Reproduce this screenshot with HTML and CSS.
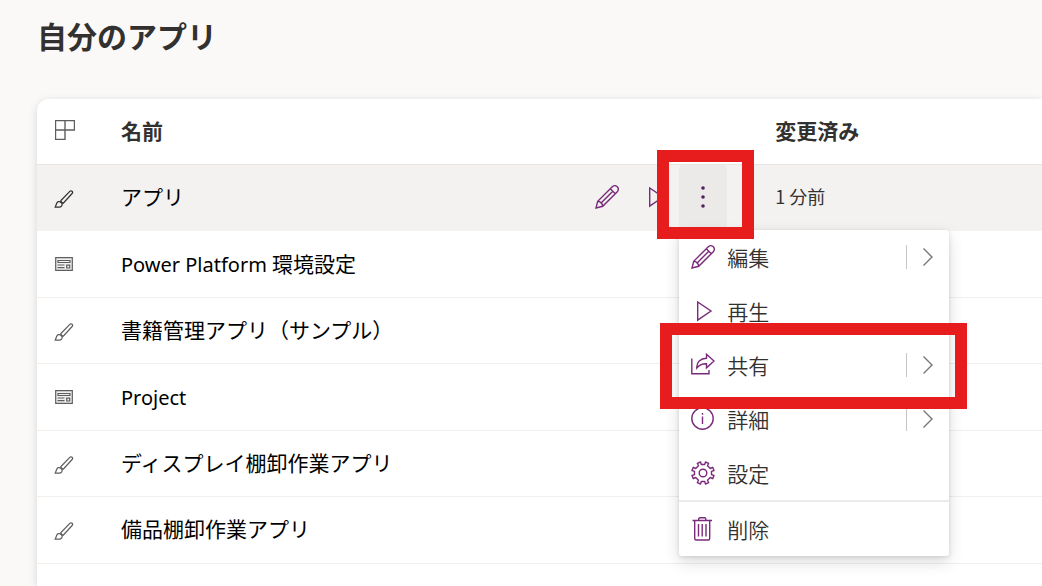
FILE: index.html
```html
<!DOCTYPE html>
<html lang="ja">
<head>
<meta charset="utf-8">
<title>自分のアプリ</title>
<link rel="stylesheet" href="styles.css">
</head>
<body>
<svg class="sprite" aria-hidden="true">
  <symbol id="pencil" viewBox="0 0 24 24"><path d="M1 23l1.700-6.700L17.300 1.700a3.500 3.500 0 0 1 5 5L7.700 21.300zM15.300 3.700l5 5M2.700 16.300c2.600.1 4.900 2.400 5 5M17.800 6.200L5.600 18.400"/></symbol>
  <symbol id="play" viewBox="0 0 24 24"><path d="M6.700 3v18.200L20 12z"/></symbol>
  <symbol id="share" viewBox="0 0 24 24"><path d="M.8 5.500v15.200H18V17M15.500 1.200l7.500 6.800-7.500 6.800v-4.100c-4.500-.2-7.200 1-9.700 4.300C5.300 9 9.500 5.300 15.500 5.200z"/></symbol>
  <symbol id="info" viewBox="0 0 24 24"><circle cx="11.500" cy="11.500" r="10.700"/><path d="M11.500 9.500v7.500M11.500 6v1.700"/></symbol>
  <symbol id="gear" viewBox="0 0 24 24"><circle cx="12" cy="12" r="3.800"/><path stroke-linejoin="round" d="M10.300 3.500L9.500 1 6.300 2.300l1.200 2.400-2.800 2.800-2.400-1.200L1 9.500l2.500.8v3.400l-2.500.8 1.300 3.200 2.400-1.200 2.800 2.800-1.200 2.400L9.500 23l.8-2.500h3.400l.8 2.500 3.200-1.300-1.200-2.400 2.800-2.800 2.400 1.200 1.300-3.200-2.500-.8v-3.400l2.500-.8-1.300-3.200-2.400 1.200-2.800-2.800 1.200-2.400L14.500 1l-.8 2.500z"/></symbol>
  <symbol id="trash" viewBox="0 0 24 24"><path d="M1.500 3.500h19.500M3.700 3.500v18a1.500 1.500 0 0 0 1.500 1.500h12a1.500 1.500 0 0 0 1.500-1.500v-18M7.700 3.500V2A1.200 1.200 0 0 1 8.900.8h4.700A1.200 1.200 0 0 1 14.800 2v1.500M7.500 7v12.500M11.200 7v12.500M15 7v12.500"/></symbol>
  <symbol id="chevron" viewBox="0 0 12 20"><path d="M1.500 1.500L10 10l-8.500 8.500"/></symbol>
  <symbol id="brush" viewBox="0 0 20 20"><path d="M6.500 13L15.800 3.300a1.500 1.500 0 0 1 2.300 2.200L9 15.500M6.500 13l2.500 2.500M1.200 19.200L2.700 15.300a2.400 2.400 0 0 1 3.800-1.200l1.500 1.500c.6 2-.9 3.600-2.700 3.600z"/></symbol>
  <symbol id="form" viewBox="0 0 20 20"><path fill="#edeff0" d="M1.700 3.700h16.600v12.600H1.700z"/><path d="M4 6.500h12v2H4zM3.500 11h7M3.500 13.700h7M12.700 11.200h3v2.800h-3z"/></symbol>
  <symbol id="grid" viewBox="0 0 20 20"><path d="M.5.500h19v9.500H.5zM.5 10v9.500H10V.5"/></symbol>
</svg>

<h1 class="title">自分のアプリ</h1>

<main class="card">
  <table class="apps">
    <thead>
      <tr>
        <th class="col-icon" scope="col" aria-label="種類"><svg class="icon grid-icon"><use href="#grid"/></svg></th>
        <th class="col-name" scope="col">名前</th>
        <th class="col-date" scope="col">変更済み</th>
      </tr>
    </thead>
    <tbody>
      <tr class="selected">
        <td><svg class="icon type-icon"><use href="#brush"/></svg></td>
        <td>
          <div class="name-cell">
            <span class="label">アプリ</span>
            <div class="commands">
              <button class="command" type="button" aria-label="編集"><svg class="icon accent"><use href="#pencil"/></svg></button>
              <button class="command" type="button" aria-label="再生"><svg class="icon accent"><use href="#play"/></svg></button>
              <div class="more">
                <button class="command open" type="button" aria-label="その他のコマンド" aria-expanded="true"><svg class="icon dots" viewBox="0 0 24 24"><circle cx="12" cy="3" r="1.800"/><circle cx="12" cy="12" r="1.800"/><circle cx="12" cy="21" r="1.800"/></svg></button>
                <div class="menu" role="menu">
                  <div class="item"><button class="action" type="button" role="menuitem"><svg class="icon accent"><use href="#pencil"/></svg>編集</button><button class="expand" type="button" aria-label="編集のオプション"><svg class="icon chevron"><use href="#chevron"/></svg></button></div>
                  <div class="item"><button class="action" type="button" role="menuitem"><svg class="icon accent"><use href="#play"/></svg>再生</button></div>
                  <div class="item"><button class="action" type="button" role="menuitem"><svg class="icon accent"><use href="#share"/></svg>共有</button><button class="expand" type="button" aria-label="共有のオプション"><svg class="icon chevron"><use href="#chevron"/></svg></button><span class="highlight highlight-item"></span></div>
                  <div class="item"><button class="action" type="button" role="menuitem"><svg class="icon accent"><use href="#info"/></svg>詳細</button><button class="expand" type="button" aria-label="詳細のオプション"><svg class="icon chevron"><use href="#chevron"/></svg></button></div>
                  <div class="item"><button class="action" type="button" role="menuitem"><svg class="icon accent"><use href="#gear"/></svg>設定</button></div>
                  <hr class="divider">
                  <div class="item"><button class="action" type="button" role="menuitem"><svg class="icon accent"><use href="#trash"/></svg>削除</button></div>
                </div>
                <span class="highlight highlight-more"></span>
              </div>
            </div>
          </div>
        </td>
        <td class="date">1 分前</td>
      </tr>
      <tr>
        <td><svg class="icon type-icon"><use href="#form"/></svg></td>
        <td><span class="latin">Power Platform </span>環境設定</td>
        <td></td>
      </tr>
      <tr>
        <td><svg class="icon type-icon"><use href="#brush"/></svg></td>
        <td><span class="label">書籍管理アプリ（サンプル）</span></td>
        <td></td>
      </tr>
      <tr>
        <td><svg class="icon type-icon"><use href="#form"/></svg></td>
        <td><span class="latin">Project</span></td>
        <td></td>
      </tr>
      <tr>
        <td><svg class="icon type-icon"><use href="#brush"/></svg></td>
        <td><span class="label">ディスプレイ棚卸作業アプリ</span></td>
        <td></td>
      </tr>
      <tr>
        <td><svg class="icon type-icon"><use href="#brush"/></svg></td>
        <td><span class="label">備品棚卸作業アプリ</span></td>
        <td></td>
      </tr>
    </tbody>
  </table>
</main>
</body>
</html>
```

FILE: styles.css
```css
* {
  box-sizing: border-box;
}

body {
  display: flex;
  flex-direction: column;
  min-height: 100vh;
  margin: 0;
  background: #faf9f8;
  color: #000;
  font-family: "Noto Sans CJK JP", sans-serif;
  font-size: 21px;
  line-height: 30px;
}

button {
  margin: 0;
  padding: 0;
  border: 0;
  background: none;
  color: inherit;
  font: inherit;
  cursor: pointer;
}

.sprite {
  position: absolute;
  width: 0;
  height: 0;
}

.title {
  margin: 0;
  padding: 13px 37px 42px;
  color: #323130;
  font-size: 30px;
  font-weight: 700;
  line-height: 44px;
}

.card {
  flex: 1;
  margin-left: 37px;
  border-top-left-radius: 12px;
  background: #fff;
  box-shadow: 0 2px 8px rgba(0, 0, 0, 0.14);
}

.apps {
  width: 100%;
  border-collapse: separate;
  border-spacing: 0;
  table-layout: fixed;
}

.apps th,
.apps td {
  height: 66px;
  padding: 0;
  border-bottom: 1px solid #f0efee;
  text-align: left;
  vertical-align: middle;
}

.apps tbody tr:nth-child(even) td {
  height: 67px;
}

.apps th {
  padding-bottom: 4px;
  border-bottom-color: #e8e6e4;
  color: #323130;
  font-weight: 700;
}

.apps .col-icon {
  width: 84px;
}

.apps .col-name {
  width: 65%;
}

.apps th:first-child,
.apps td:first-child {
  padding-left: 17px;
}

.apps th:last-child,
.apps td:last-child {
  padding-left: 1px;
}

.apps .selected td {
  border-bottom-color: #f3f2f1;
  background: #f3f2f1;
}

.apps .date {
  padding-bottom: 4px;
  color: #323130;
  font-size: 18px;
}

.label {
  display: block;
  padding-bottom: 4px;
}

.latin {
  font-family: "Noto Sans", "Open Sans", sans-serif;
  font-size: 20px;
}

.icon {
  display: block;
  flex: none;
  width: 24px;
  height: 24px;
  fill: none;
  stroke: currentColor;
  stroke-width: 1.4;
}

.grid-icon {
  width: 20px;
  height: 20px;
  margin-left: 1px;
  color: #605e5c;
}

.type-icon {
  width: 20px;
  height: 20px;
  color: #605e5c;
  stroke-width: 1.2;
}

.selected .type-icon {
  color: #323130;
}

.accent {
  color: #7a2a7a;
}

.dots {
  fill: #53205b;
  stroke: none;
}

.name-cell {
  display: flex;
  align-items: center;
  justify-content: space-between;
  padding-right: 47px;
}

.commands {
  display: flex;
}

.command {
  display: flex;
  align-items: center;
  justify-content: center;
  width: 48px;
  height: 65px;
  padding-bottom: 2px;
}

.open {
  border-radius: 4px;
  background: #ebeae9;
}

.more {
  position: relative;
}

.menu {
  position: absolute;
  top: 100%;
  left: 0;
  z-index: 1;
  width: 270px;
  border-radius: 3px;
  background: #fff;
  box-shadow: 0 6px 16px rgba(0, 0, 0, 0.14), 0 1px 4px rgba(0, 0, 0, 0.12);
  color: #323130;
  font-weight: 350;
}

.item {
  position: relative;
  display: flex;
  align-items: center;
}

.action {
  display: flex;
  flex: 1;
  align-items: center;
  gap: 12px;
  height: 54px;
  padding: 0 12px;
}

.expand {
  display: flex;
  align-items: center;
  justify-content: center;
  width: 43px;
  height: 24px;
  border-left: 1px solid #c8c6c4;
}

.chevron {
  width: 12px;
  height: 20px;
  color: #797775;
}

.divider {
  height: 2px;
  margin: 0;
  border: 0;
  background: #edebe9;
}

.highlight {
  position: absolute;
  border: 12px solid #e71d1d;
  pointer-events: none;
}

.highlight-more {
  inset: -15px -27px -9px -22px;
  z-index: 2;
}

.highlight-item {
  inset: -15px -18px -17px -19px;
  z-index: 1;
}
```
